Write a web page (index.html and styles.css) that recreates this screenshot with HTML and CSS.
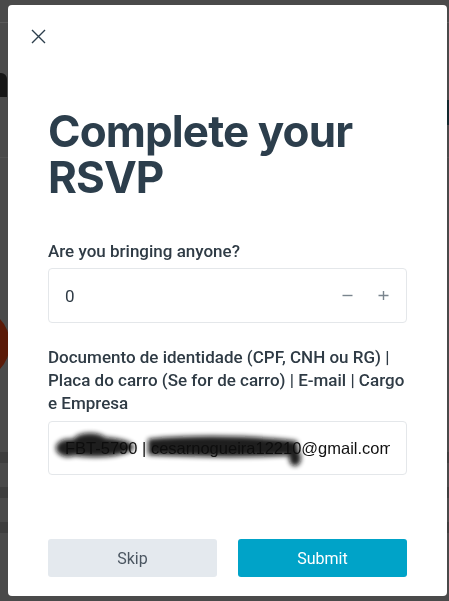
FILE: index.html
```html
<!DOCTYPE html>
<html lang="en">
<head>
<meta charset="utf-8">
<title>Complete your RSVP</title>
<link rel="stylesheet" href="styles.css">
</head>
<body>
<div class="page">
  <div class="page-header"></div>
  <div class="page-title"></div>
  <div class="page-rule"></div>
  <div class="page-avatar"></div>
  <div class="page-rows">
    <div class="page-row"></div>
    <div class="page-row"></div>
    <div class="page-row"></div>
  </div>
  <div class="page-side"></div>
</div>

<div class="modal" role="dialog" aria-label="Complete your RSVP">
  <div class="modal-top">
    <button class="close-btn" aria-label="Close">
      <svg width="15" height="15" viewBox="0 0 15 15"><path d="M1 1 L14 14 M14 1 L1 14" stroke="#2c3e4c" stroke-width="1.4" fill="none"/></svg>
    </button>
  </div>
  <div class="modal-body">
    <h1 class="title">Complete your RSVP</h1>

    <label class="field-label">Are you bringing anyone?</label>
    <div class="stepper">
      <span class="stepper-value">0</span>
      <span class="stepper-controls">
        <svg class="step-icon" width="11" height="11" viewBox="0 0 11 11"><path d="M0.5 5.5 H10.5" stroke="#7a858e" stroke-width="1.4"/></svg>
        <svg class="step-icon" width="11" height="11" viewBox="0 0 11 11"><path d="M0.5 5.5 H10.5 M5.5 1 V10" stroke="#7a858e" stroke-width="1.4"/></svg>
      </span>
    </div>

    <label class="field-label field-label-long">Documento de identidade (CPF, CNH ou RG) | Placa do carro (Se for de carro) | E-mail | Cargo e Empresa</label>
    <div class="text-wrap">
      <input class="text-input" type="text" value="FBT-5790 | cesarnogueira12210@gmail.com">
      <svg class="scribble" width="270" height="54" viewBox="0 0 270 54" aria-hidden="true">
        <defs><filter id="blur" x="-20%" y="-50%" width="140%" height="200%"><feGaussianBlur stdDeviation="2.6"/></filter></defs>
        <g filter="url(#blur)" fill="#111" opacity="0.93">
          <ellipse cx="47" cy="26" rx="39" ry="10"/>
          <ellipse cx="42" cy="19" rx="16" ry="7"/>
          <ellipse cx="20" cy="27" rx="12" ry="9"/>
          <path d="M100 18 C150 13 210 15 249 20 L251 34 C200 37 150 36 100 34 Z"/>
          <ellipse cx="247" cy="37" rx="6" ry="8"/>
        </g>
      </svg>
    </div>

    <div class="actions">
      <button class="btn btn-skip">Skip</button>
      <button class="btn btn-submit">Submit</button>
    </div>
  </div>
</div>
</body>
</html>
```
FILE: styles.css
```css
* { box-sizing: border-box; }

html, body {
  margin: 0;
  padding: 0;
  height: 100%;
}

body {
  background: #4a4a4a;
  font-family: Roboto, "Noto Sans", sans-serif;
  overflow: hidden;
}

/* dimmed page behind the modal */
.page {
  position: relative;
  height: 601px;
}
.page-header {
  height: 23px;
  border-bottom: 1px solid #5a5a5a;
}
.page-title {
  margin-top: 50px;
  width: 7px;
  height: 24px;
  border-radius: 0 6px 0 0;
  background: #161616;
}
.page-rule {
  margin-top: 60px;
  border-top: 1px solid #525252;
}
.page-avatar {
  margin-top: 150px;
  margin-left: -62px;
  width: 72px;
  height: 72px;
  border-radius: 50%;
  background: #5a1a08;
}
.page-rows {
  margin-top: 72px;
  display: flex;
  flex-direction: column;
  gap: 24px;
}
.page-row {
  height: 11px;
  background: #3e3e3e;
}
.page-side {
  position: absolute;
  right: 0;
  top: 100px;
  width: 4px;
  height: 25px;
  background: #12292e;
}

/* modal */
.modal {
  position: fixed;
  left: 8px;
  top: 5px;
  width: 439px;
  height: 591px;
  background: #ffffff;
  border-radius: 4px;
  display: flex;
  flex-direction: column;
}

.modal-top {
  padding: 24px 0 0 23px;
}
.close-btn {
  display: block;
  width: 15px;
  height: 15px;
  padding: 0;
  border: 0;
  background: none;
  cursor: pointer;
}
.close-btn svg { display: block; }

.modal-body {
  flex: 1;
  padding: 0 40px 19px 40px;
  display: flex;
  flex-direction: column;
}

.title {
  margin: 64px 0 0 0;
  font-family: Inter, "Noto Sans", sans-serif;
  font-size: 44px;
  line-height: 46px;
  font-weight: 700;
  letter-spacing: -0.9px;
  color: #2c3e4c;
}

.field-label {
  display: block;
  margin-top: 39px;
  font-size: 17px;
  line-height: 24px;
  font-weight: 500;
  color: #2f3b45;
}
.field-label-long {
  margin-top: 23px;
  line-height: 23px;
}

.stepper {
  margin-top: 5px;
  height: 55px;
  border: 1px solid #e4e7ea;
  border-radius: 4px;
  display: flex;
  align-items: center;
  justify-content: space-between;
  padding: 0 17px 0 16px;
}
.stepper-value {
  font-size: 17px;
  color: #2f3b45;
}
.stepper-controls {
  display: flex;
  align-items: center;
  gap: 25px;
}
.step-icon { display: block; }

.text-wrap {
  position: relative;
  margin-top: 6px;
}
.text-input {
  display: block;
  width: 100%;
  height: 54px;
  border: 1px solid #e4e7ea;
  border-radius: 4px;
  padding: 0 16px;
  font-family: "Liberation Sans", Arial, sans-serif;
  font-size: 16.5px;
  color: #111;
  background: #fff;
  outline: none;
}
.scribble {
  position: absolute;
  left: 0;
  top: 0;
  pointer-events: none;
}

.actions {
  margin-top: auto;
  display: grid;
  grid-template-columns: 1fr 1fr;
  gap: 21px;
}
.btn {
  height: 38px;
  border: 0;
  border-radius: 3px;
  font-family: Roboto, "Noto Sans", sans-serif;
  font-size: 16px;
  font-weight: 400;
  cursor: pointer;
}
.btn-skip {
  background: #e4e9ee;
  color: #4b5661;
}
.btn-submit {
  background: #00a3c8;
  color: #ffffff;
}
```
